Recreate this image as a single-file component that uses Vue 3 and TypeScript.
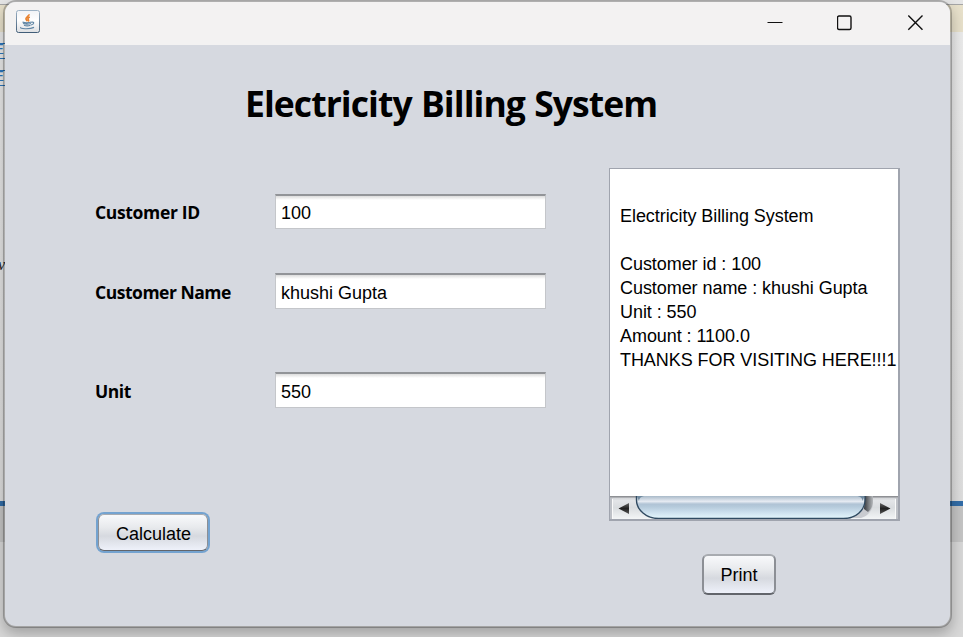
<script setup lang="ts">
import { computed, ref } from 'vue'

interface Field {
  id: string
  label: string
  value: string
}

const fields = ref<Field[]>([
  { id: 'customer-id', label: 'Customer ID', value: '100' },
  { id: 'customer-name', label: 'Customer Name', value: 'khushi Gupta' },
  { id: 'unit', label: 'Unit', value: '550' },
])

const rate = 2

function makeBill(): string {
  const [id, name, unit] = fields.value.map((f) => f.value)
  return [
    '',
    'Electricity Billing System',
    '',
    `Customer id : ${id}`,
    `Customer name : ${name}`,
    `Unit : ${unit}`,
    `Amount : ${(Number(unit) * rate).toFixed(1)}`,
    'THANKS FOR VISITING HERE!!!1',
  ].join('\n')
}

const bill = ref(makeBill())
const billLines = computed(() => bill.value.split('\n'))

function calculate(): void {
  bill.value = makeBill()
}

function printBill(): void {
  window.print()
}
</script>

<template>
  <div class="desktop">
    <div class="backdrop" aria-hidden="true">
      <div class="strip top"></div>
      <div class="strip cream"></div>
      <div class="strip editor">
        <span class="link first">E</span>
        <span class="link second">E</span>
        <span class="code">v</span>
      </div>
      <div class="strip blue"></div>
      <div class="strip tabs"></div>
      <div class="strip bottom"></div>
    </div>

    <div class="window">
      <header class="titlebar">
        <svg class="java" width="24" height="24" viewBox="0 0 24 24">
          <defs>
            <linearGradient id="tile" x1="0" y1="0" x2="0" y2="1">
              <stop offset="0" stop-color="#f1f3f6" />
              <stop offset="0.45" stop-color="#ffffff" />
              <stop offset="1" stop-color="#dddfe2" />
            </linearGradient>
            <linearGradient id="edge" x1="0" y1="0" x2="0" y2="1">
              <stop offset="0" stop-color="#9db2c5" />
              <stop offset="1" stop-color="#405d78" />
            </linearGradient>
          </defs>
          <rect x="0.5" y="0.5" width="23" height="22" rx="2" fill="url(#tile)" stroke="url(#edge)" />
          <path d="M13 4.300c.5 2-4 3-3 5 .3.8 1 1.200 1.300 2M13.800 7c-2 1-2.300 1.800-1.400 2.700.6.8.1 1.300-.3 1.700" fill="none" stroke="#e98432" stroke-width="1.700" />
          <path d="M6.500 12c2 .8 6.500.8 9 0M7 13.500c2.500.8 5.500.8 8 0M8 15.300c2 .8 4.500.8 6.500 0M15.500 12.300c3-1 3 2-.5 2.700M5 17.200c-2.500 1.800 9 2.200 13 .2" fill="none" stroke="#5f85a4" stroke-width="1.200" />
        </svg>
        <div class="controls">
          <svg width="16" height="16" viewBox="0 0 16 16"><path d="M0.500 7.500h15" stroke="#111" /></svg>
          <svg width="16" height="16" viewBox="0 0 16 16"><rect x="0.500" y="1" width="13.500" height="13.500" rx="1.500" fill="none" stroke="#111" stroke-width="1.400" /></svg>
          <svg width="16" height="16" viewBox="0 0 16 16"><path d="M1.300 0.600l14.200 14.200M15.500 0.600L1.300 14.800" stroke="#111" stroke-width="1.400" /></svg>
        </div>
      </header>

      <main class="client">
        <h1>Electricity Billing System</h1>
        <div class="columns">
          <form class="form" @submit.prevent="calculate">
            <div v-for="field in fields" :key="field.id" class="row" :class="field.id">
              <label :for="field.id">{{ field.label }}</label>
              <input :id="field.id" v-model="field.value" type="text" spellcheck="false" />
            </div>
            <button class="calculate" type="submit">Calculate</button>
          </form>

          <section class="output">
            <div class="area">
              <div class="text">
                <div v-for="(line, i) in billLines" :key="i" class="line">{{ line }}</div>
              </div>
              <svg class="scrollbar" width="288" height="23" viewBox="0 0 288 23">
                <defs>
                  <linearGradient id="track" x1="0" y1="0" x2="0" y2="1">
                    <stop offset="0" stop-color="#c5c7ca" />
                    <stop offset="0.2" stop-color="#e3e5e8" />
                    <stop offset="0.5" stop-color="#d9dcdf" />
                    <stop offset="1" stop-color="#f3f5f6" />
                  </linearGradient>
                  <linearGradient id="thumb" x1="0" y1="0" x2="0" y2="1">
                    <stop offset="0" stop-color="#a9bac9" />
                    <stop offset="0.24" stop-color="#e6ebf2" />
                    <stop offset="0.36" stop-color="#b0c3d5" />
                    <stop offset="0.48" stop-color="#b5cadb" />
                    <stop offset="0.75" stop-color="#cfe2ef" />
                    <stop offset="1" stop-color="#e5f7fc" />
                  </linearGradient>
                  <linearGradient id="shade" x1="0" y1="0" x2="1" y2="0">
                    <stop offset="0" stop-color="#36393e" />
                    <stop offset="1" stop-color="#b7babd" />
                  </linearGradient>
                  <linearGradient id="arrow" x1="0" y1="0" x2="0" y2="1">
                    <stop offset="0" stop-color="#666" />
                    <stop offset="0.5" stop-color="#222" />
                    <stop offset="1" stop-color="#555" />
                  </linearGradient>
                </defs>
                <rect width="288" height="23" fill="url(#track)" />
                <rect width="288" height="1.500" fill="#8e9094" />
                <path d="M2.500 3v20M285.500 3v20" stroke="#fafafa" />
                <path d="M1 2v21M287 2v21" stroke="#bec1c7" stroke-width="2" />
                <path d="M253 0h10v7c0 7-5 13-12 15h-8z" fill="#c9cbd0" />
                <path d="M255 0h8v7q-1 6-5 9l-4-3z" fill="url(#shade)" />
                <path d="M26.500 0v4c0 10 10 18.500 22 18.500h185c12 0 21.500-8 21.500-18.500v-4z" fill="url(#thumb)" />
                <path d="M27 0h7q-5 1-5 5zM254.500 0h-7q5 1 5 5z" fill="#6f899f" />
                <path d="M26.500 0v4c0 10 10 18.500 22 18.500h185c12 0 21.500-8 21.500-18.500v-4" fill="none" stroke="#304a61" stroke-width="1.400" />
                <path d="M8.500 12.500l10.500-5.500v11zM280.500 12.500l-10.500-5.500v11z" fill="url(#arrow)" />
              </svg>
            </div>
            <button class="print" type="button" @click="printBill">Print</button>
          </section>
        </div>
      </main>
    </div>
  </div>
</template>

<style>
body {
  margin: 0;
  overflow: hidden;
}
</style>

<style scoped>
* {
  box-sizing: border-box;
}

.desktop {
  position: relative;
  width: 963px;
  height: 637px;
  overflow: hidden;
  font-family: "Liberation Sans", Arial, sans-serif;
  color: #000;
}

.backdrop {
  display: flex;
  flex-direction: column;
  height: 637px;
}

.top {
  height: 5px;
  background: #e6e6e6;
  border-bottom: 1px solid #a6a6a6;
}

.cream {
  height: 27px;
  background: #e8e1cb;
}

.editor {
  position: relative;
  height: 469px;
  background: linear-gradient(#ebebeb, #dedede);
}

.link,
.code {
  position: absolute;
  left: -5px;
  font: 15px/13px "Liberation Mono", monospace;
}

.link {
  width: 11px;
  height: 16px;
  color: #2c76bd;
  border: solid #2c76bd;
  border-width: 1px 0;
}

.first {
  top: 11px;
}

.second {
  top: 38px;
}

.code {
  top: 226px;
  left: -2px;
  color: #222;
  font: italic 16px/14px "Liberation Serif", serif;
}

.blue {
  height: 5px;
  background: #326da8;
}

.tabs {
  height: 36px;
  background: #c5c5c5;
}

.bottom {
  flex: 1;
  background: #d8d8d8;
}

.window {
  position: absolute;
  top: 0;
  left: 3px;
  width: 949px;
  height: 628px;
  border: 2px solid rgba(0, 0, 0, 0.24);
  border-radius: 13px;
  overflow: hidden;
  background: #d6d9e0;
  background-clip: padding-box;
  box-shadow: 0 6px 14px rgba(0, 0, 0, 0.25);
}

.titlebar {
  display: flex;
  justify-content: space-between;
  align-items: flex-start;
  height: 43px;
  padding: 8px 27px 0 11px;
  background: #f3f2f2;
}

.controls {
  display: flex;
  gap: 54px;
  padding-top: 5px;
}

.client {
  height: 581px;
}

h1 {
  margin: 0;
  padding: 33px 0 0 240px;
  height: 123px;
  font: 700 35.5px/50px "Open Sans", "Noto Sans", sans-serif;
  letter-spacing: -0.94px;
  word-spacing: 1px;
  white-space: nowrap;
}

.columns {
  display: flex;
  justify-content: space-between;
  padding: 0 50px 0 90px;
}

.form {
  width: 451px;
  padding-top: 26px;
}

.row {
  display: grid;
  grid-template-columns: 180px 271px;
  align-items: center;
  height: 36px;
}

.row.customer-id {
  height: 35px;
  margin-bottom: 44px;
}

.row.customer-name {
  margin-bottom: 63px;
}

.row.unit {
  margin-bottom: 106px;
}

label {
  font: 700 17.5px/24px "Open Sans", "Noto Sans", sans-serif;
  letter-spacing: -0.48px;
  padding-top: 2px;
}

.customer-id label {
  letter-spacing: -0.34px;
  padding-top: 1px;
}

input {
  width: 271px;
  height: 100%;
  padding: 3px 5px 0;
  border: 1px solid #c4c6ca;
  border-top: 2px solid #929498;
  border-radius: 0;
  outline: none;
  background: linear-gradient(#dcdcdc, #fff 4px);
  color: #000;
  font: 18px "Liberation Sans", Arial, sans-serif;
}

.customer-id input {
  padding-top: 2px;
}

button {
  display: block;
  padding: 0;
  border: 1px solid #8c8f95;
  border-top-color: #a8abb0;
  border-bottom-color: #62656b;
  border-radius: 6px;
  background: linear-gradient(#f8f9fb, #e8eaed 35%, #d6d9df 60%, #eef1fa);
  color: #000;
  font: 18px "Liberation Sans", Arial, sans-serif;
}

.calculate {
  width: 110px;
  height: 37px;
  margin-left: 3px;
  padding: 3px 0 0 1px;
  box-shadow: 0 0 0 2px #74a3d0;
}

.output {
  width: 291px;
}

.area {
  display: flex;
  flex-direction: column;
  justify-content: space-between;
  height: 353px;
  border: solid #a0a4ae;
  border-width: 1px 2px 2px 1px;
  background: #fff;
}

.text {
  padding: 11px 0 0 10px;
  font-size: 18px;
  line-height: 24px;
  letter-spacing: -0.06px;
  white-space: nowrap;
}

.line {
  height: 24px;
}

.scrollbar {
  display: block;
}

.print {
  width: 74px;
  height: 41px;
  margin: 33px 0 0 93px;
  border-width: 2px;
  padding-top: 1px;
}
</style>
